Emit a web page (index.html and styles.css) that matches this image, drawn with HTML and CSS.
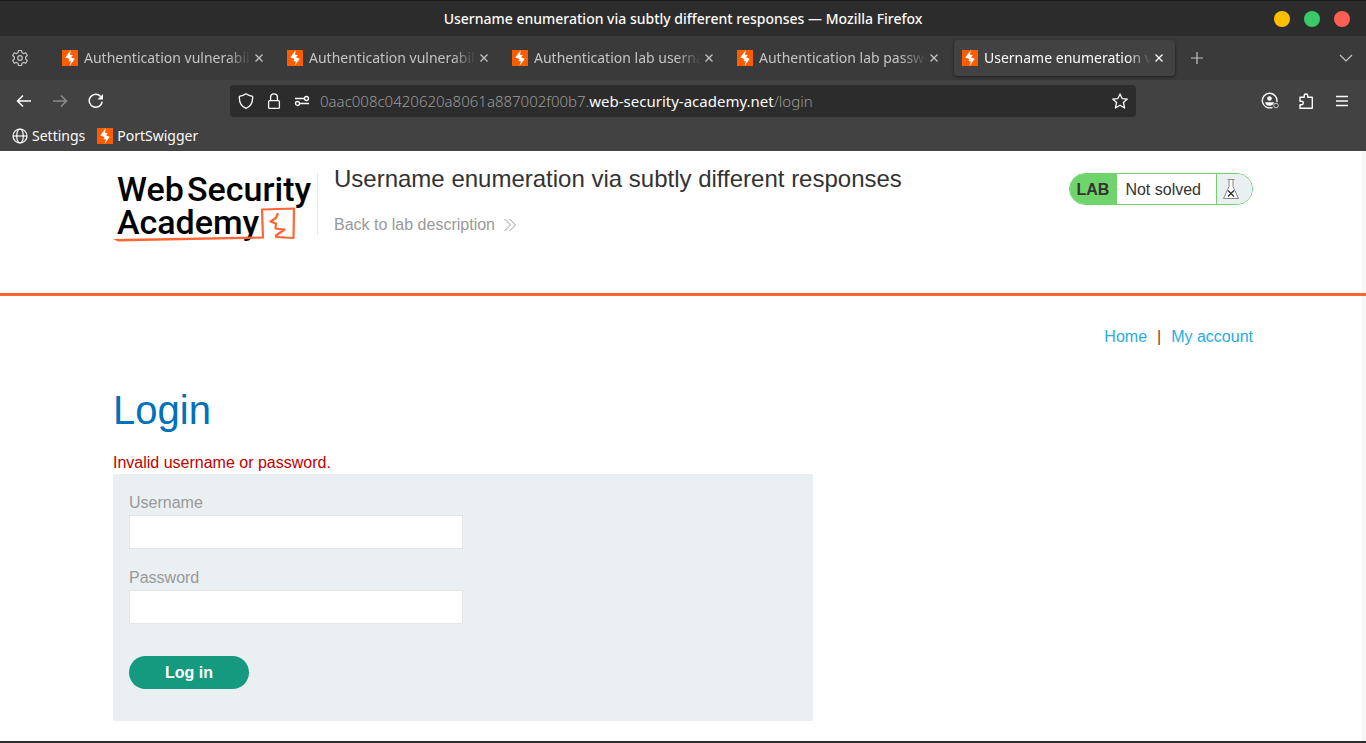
FILE: index.html
```html
<!DOCTYPE html>
<html lang="en">
<head>
<meta charset="utf-8">
<title>Username enumeration via subtly different responses</title>
<link rel="stylesheet" href="styles.css">
</head>
<body>
<svg class="defs" aria-hidden="true">
  <symbol id="bolt" viewBox="0 0 16 16"><rect width="16" height="16" fill="#ff5c00"/><path d="M8.800 0L3.300 7.500l4.200 1.400-1 2.100 2.500.600L7.500 16l5.300-7.200-4-1.500L11 5.300l-3-.600z" fill="#fff"/></symbol>
  <symbol id="x" viewBox="0 0 10 10"><path d="M1.5 1.5l7 7M8.5 1.5l-7 7" fill="none" stroke="currentColor" stroke-width="1.3"/></symbol>
</svg>

<header class="titlebar">
  <span class="window-title">Username enumeration via subtly different responses — Mozilla Firefox</span>
  <div class="window-buttons">
    <button class="dot dot-min" aria-label="Minimize"></button>
    <button class="dot dot-max" aria-label="Maximize"></button>
    <button class="dot dot-close" aria-label="Close"></button>
  </div>
</header>

<div class="tabbar">
  <button class="icon-button gear" aria-label="Tab settings"><svg width="18" height="18" viewBox="0 0 18 18" fill="none" stroke="currentColor" stroke-width="1.2" stroke-linejoin="round"><path d="M7.5 1.5h3l.5 2.2 1.6.9 2.1-.8 1.6 2.7-1.6 1.5v2l1.6 1.5-1.6 2.7-2.1-.8-1.6.9-.5 2.2h-3L7 14.3l-1.6-.9-2.1.8-1.6-2.7L3.300 10V8L1.700 6.500l1.600-2.700 2.100.8L7 3.700z"/><circle cx="9" cy="9" r="2.300"/></svg></button>
  <div class="tabs">
    <div class="tab"><button class="tab-label"><svg class="favicon"><use href="#bolt"/></svg><span>Authentication vulnerabilities</span></button><button class="tab-close" aria-label="Close tab"><svg><use href="#x"/></svg></button></div>
    <div class="tab"><button class="tab-label"><svg class="favicon"><use href="#bolt"/></svg><span>Authentication vulnerabilities</span></button><button class="tab-close" aria-label="Close tab"><svg><use href="#x"/></svg></button></div>
    <div class="tab"><button class="tab-label"><svg class="favicon"><use href="#bolt"/></svg><span>Authentication lab usernames</span></button><button class="tab-close" aria-label="Close tab"><svg><use href="#x"/></svg></button></div>
    <div class="tab"><button class="tab-label"><svg class="favicon"><use href="#bolt"/></svg><span>Authentication lab passwords</span></button><button class="tab-close" aria-label="Close tab"><svg><use href="#x"/></svg></button></div>
    <div class="tab tab-active"><button class="tab-label"><svg class="favicon"><use href="#bolt"/></svg><span>Username enumeration via</span></button><button class="tab-close" aria-label="Close tab"><svg><use href="#x"/></svg></button></div>
  </div>
  <button class="icon-button" aria-label="New tab"><svg width="14" height="14" viewBox="0 0 14 14" stroke="currentColor" stroke-width="1.2"><path d="M7 1v12M1 7h12"/></svg></button>
  <button class="icon-button tab-list" aria-label="List all tabs"><svg width="14" height="14" viewBox="0 0 14 14" fill="none" stroke="currentColor" stroke-width="1.2"><path d="M1 4l6 6 6-6"/></svg></button>
</div>

<nav class="toolbar" aria-label="Navigation">
  <div class="nav-buttons">
    <button class="icon-button" aria-label="Back"><svg width="16" height="16" viewBox="0 0 16 16" fill="none" stroke="currentColor" stroke-width="1.500"><path d="M15 8H2M7 2.500L1.500 8 7 13.500"/></svg></button>
    <button class="icon-button dim" aria-label="Forward"><svg width="16" height="16" viewBox="0 0 16 16" fill="none" stroke="currentColor" stroke-width="1.500"><path d="M1 8h13M9 2.500L14.500 8 9 13.500"/></svg></button>
    <button class="icon-button" aria-label="Reload"><svg width="16" height="16" viewBox="0 0 16 16" fill="none" stroke="currentColor" stroke-width="1.500"><path d="M14.200 8.600A6.500 6.500 0 1 1 12.600 3.400"/><path d="M15 1v5.500H9.500z" fill="currentColor" stroke="none"/></svg></button>
  </div>
  <div class="urlbar">
    <button class="icon-button" aria-label="Tracking protection"><svg width="16" height="16" viewBox="0 0 16 16" fill="none" stroke="currentColor" stroke-width="1.300" stroke-linejoin="round"><path d="M8 .8c2 1.500 4 2.200 6.600 2.500C15 9 12.500 13.500 8 15.300 3.500 13.500 1 9 1.400 3.300 4 3 6 2.300 8 .8z"/></svg></button>
    <button class="icon-button" aria-label="Site security"><svg width="16" height="16" viewBox="0 0 16 16" fill="none" stroke="currentColor" stroke-width="1.300"><rect x="2.600" y="7.600" width="10.800" height="7.800" rx="1"/><path d="M4.600 7.600V4.200a3.400 3.400 0 0 1 6.800 0v3.400"/></svg></button>
    <button class="icon-button" aria-label="Permissions"><svg width="16" height="16" viewBox="0 0 16 16" fill="none" stroke="currentColor" stroke-width="1.300"><path d="M1 5.500h9M6 10.500h9"/><circle cx="12.500" cy="5.500" r="2"/><circle cx="3.500" cy="10.500" r="2"/></svg></button>
    <div class="url" role="textbox" aria-label="Address" tabindex="0">0aac008c0420620a8061a887002f00b7.<span class="url-domain">web-security-academy.net</span>/login</div>
    <button class="icon-button" aria-label="Bookmark this page"><svg width="16" height="16" viewBox="0 0 16 16" fill="none" stroke="currentColor" stroke-width="1.300" stroke-linejoin="round"><path d="M8 .9l2.100 4.700 5.200.5-3.900 3.400 1.200 5.500L8 12.200 3.400 15l1.200-5.500L.7 6.100l5.200-.5z"/></svg></button>
  </div>
  <div class="tool-buttons">
    <button class="icon-button" aria-label="Account"><svg width="18" height="18" viewBox="0 0 18 18" fill="none" stroke="currentColor" stroke-width="1.400"><path d="M11.500 15.300A7.300 7.300 0 1 1 15.800 10"/><circle cx="8.500" cy="6.500" r="2.300" fill="currentColor" stroke="none"/><path d="M4 10.200h9l-1 2.300c-2 1.700-5 1.700-7 0z" fill="currentColor" stroke="none"/><circle cx="15" cy="13.500" r="2.300" stroke-width="1" opacity=".7"/></svg></button>
    <button class="icon-button" aria-label="Extensions"><svg width="16" height="16" viewBox="0 0 16 16" fill="none" stroke="currentColor" stroke-width="1.400" stroke-linejoin="round"><path d="M2 6V4.300h4.200V2.800a1.800 1.800 0 0 1 3.600 0v1.500h4.500v11H2v-3.600h1.600a1.700 1.700 0 0 0 0-3.400H2z"/></svg></button>
    <button class="icon-button" aria-label="Menu"><svg width="14" height="14" viewBox="0 0 14 14" stroke="currentColor" stroke-width="1.400"><path d="M1 2.500h12M1 7h12M1 11.500h12"/></svg></button>
  </div>
</nav>

<div class="bookmarks">
  <a href="#settings"><svg class="favicon" viewBox="0 0 16 16" fill="none" stroke="currentColor" stroke-width="1.200"><circle cx="8" cy="8" r="7"/><ellipse cx="8" cy="8" rx="3.300" ry="7"/><path d="M1 8h14"/></svg>Settings</a>
  <a href="#portswigger"><svg class="favicon"><use href="#bolt"/></svg>PortSwigger</a>
</div>

<div class="page">
  <div class="lab-header">
    <div class="container lab-row">
      <a class="logo" href="#academy" aria-label="Web Security Academy">
        <svg width="204" height="76" viewBox="0 0 204 76">
          <g class="logo-text"><text x="4" y="34">Web</text><text x="74" y="34">Security</text><text x="4" y="67">Academy</text></g>
          <g fill="none" stroke="#ff6633" stroke-width="2.200" stroke-linejoin="round"><path d="M150 71.500L149 42.500L181 41.500L180.500 71L163 70"/><path d="M165 46l-2 5-5.500 3.500 5.500 2-.500 5 9 1-8.500 6 .500 2.500"/></g>
          <path d="M0 72L150 69.500V71.500L5 74.500z" fill="#ff6633"/>
        </svg>
      </a>
      <div class="lab-title">
        <h2>Username enumeration via subtly different responses</h2>
        <a href="#description">Back to lab description <svg width="14" height="14" viewBox="0 0 14 14" fill="none" stroke="currentColor"><path d="M1.500 1l6 6-6 6M6.500 1l6 6-6 6"/></svg></a>
      </div>
      <div class="lab-status">
        <strong>LAB</strong><span>Not solved</span>
        <div class="flask"><svg width="18" height="22" viewBox="0 0 18 22" fill="#fff" stroke="#888"><path d="M5.500 1.500h7M7 1.500v7L1.500 20.500h15L11 8.500v-7"/><path d="M6 12.500l6 6M12 12.500l-6 6" stroke="#333" stroke-width="1.400"/></svg></div>
      </div>
    </div>
  </div>
  <main class="container">
    <nav class="links"><a href="#home">Home</a><span>|</span><a href="#account">My account</a></nav>
    <h1>Login</h1>
    <p class="warning">Invalid username or password.</p>
    <form class="login-form">
      <label for="username">Username</label>
      <input id="username" type="text" name="username">
      <label for="password">Password</label>
      <input id="password" type="password" name="password">
      <button type="submit">Log in</button>
    </form>
  </main>
</div>
</body>
</html>
```
FILE: styles.css
```css
* { box-sizing: border-box; }
body {
  margin: 0;
  min-height: 100vh;
  display: flex;
  flex-direction: column;
  background: #fff;
  font: 16px/20px "Liberation Sans", Arial, sans-serif;
  color: #333332;
}
button { font: inherit; color: inherit; background: none; border: 0; padding: 0; }
a { text-decoration: none; color: inherit; }
svg { flex: none; }
.defs { display: none; }

.titlebar, .tabbar, .toolbar, .bookmarks {
  display: flex;
  align-items: center;
  flex: none;
  font: 14px/20px "Noto Sans", "Open Sans", sans-serif;
  color: #fbfbfb;
}
.titlebar {
  display: grid;
  grid-template-columns: 1fr auto 1fr;
  height: 36px;
  padding-right: 16px;
  background: #2c2c2c;
  border-top: 1px solid #1c1c1c;
}
.window-title { grid-column: 2; font-weight: 500; padding-left: 16px; }
.window-buttons { display: flex; gap: 14px; justify-content: flex-end; }
.dot { width: 16px; height: 16px; border-radius: 50%; }
.dot-min { background: #ffbf00; }
.dot-max { background: #38c968; }
.dot-close { background: #ff5f52; }

.icon-button { display: grid; place-items: center; width: 28px; height: 28px; flex: none; }
.icon-button.dim { color: #8b8b8b; }

.tabbar { height: 44px; padding: 0 6px; background: #3a3a3a; color: #c4c4c4; }
.tabs { display: flex; gap: 4px; margin: 0 8px 0 20px; min-width: 0; }
.tab {
  display: flex;
  align-items: center;
  width: 221px;
  height: 36px;
  padding: 0 8px;
  border-radius: 4px;
  min-width: 0;
}
.tab-active { background: #424242; color: #fbfbfb; box-shadow: 0 1px 3px #1c1c1c; }
.tab-label { display: flex; align-items: center; gap: 6px; flex: 1; min-width: 0; text-align: left; }
.tab-label span {
  flex: 1;
  overflow: hidden;
  white-space: nowrap;
  mask-image: linear-gradient(to left, transparent, #000 24px);
}
.favicon { width: 16px; height: 16px; }
.tab-close { display: grid; place-items: center; width: 16px; height: 20px; }
.tab-close svg { width: 10px; height: 10px; }
.tab-list { margin-left: auto; }

.toolbar { height: 42px; padding: 0 10px; background: #424242; }
.nav-buttons, .tool-buttons { display: flex; gap: 8px; width: 220px; flex: none; }
.tool-buttons { justify-content: flex-end; }
.urlbar {
  flex: 1;
  display: flex;
  align-items: center;
  height: 32px;
  max-width: 906px;
  padding: 0 2px;
  background: #2c2c2c;
  border-radius: 4px;
}
.url { flex: 1; padding-left: 4px; color: #9a9a9a; white-space: nowrap; overflow: hidden; font-size: 15px; font-weight: 300; }
.url-domain { color: #fbfbfb; font-weight: 400; }
.bookmarks { height: 29px; padding: 0 12px 2px; gap: 12px; background: #424242; }
.bookmarks a { display: flex; align-items: center; gap: 4px; }

.page {
  flex: 1;
  border-bottom: 2px solid #2c2c2c;
  background: linear-gradient(#f7f7f7, #f7f7f7) right / 4px 100% no-repeat;
}
.container { width: 100%; max-width: 1140px; margin: 0 auto; }
.lab-header { border-bottom: 3px solid #ff6633; }
.lab-row { display: flex; align-items: flex-start; padding: 16px 0; min-height: 142px; }
.logo { flex: none; }
.logo svg { display: block; }
.logo-text { font: 500 34px/34px Roboto, sans-serif; fill: #000; }
.lab-title { flex: 1; margin-top: 6px; padding-left: 16px; border-left: 1px solid #e6e6e6; height: 62px; }
.lab-title h2 { margin: -8px 0 22px; font-size: 24px; line-height: 28px; font-weight: 400; }
.lab-title a { display: flex; align-items: center; gap: 8px; color: #999; }
.lab-status {
  display: flex;
  margin-top: 6px;
  height: 32px;
  line-height: 32px;
  border: 1px solid #70d46d;
  border-radius: 16px;
  overflow: hidden;
}
.lab-status strong { padding: 0 8px 0 7px; background: #70d46d; }
.lab-status span { padding: 0 15px 0 8px; }
.flask { display: grid; place-items: center; width: 36px; padding-right: 8px; border-left: 1px solid #70d46d; background: #eaeff2; }

.links { display: flex; justify-content: flex-end; gap: 10px; padding: 31px 0 39px; color: #6d4c1c; }
.links a { color: #29ace2; }
h1 { margin: 0; font-size: 40px; line-height: 48px; font-weight: 400; color: #0071ba; }
.warning { margin: 19px 0 1px; color: #c00000; }
.login-form {
  display: flex;
  flex-direction: column;
  align-items: flex-start;
  max-width: 700px;
  padding: 19px 16px 32px;
  background: #eaeff2;
}
.login-form label { color: #999; margin-bottom: 2px; }
.login-form input {
  width: 50%;
  height: 34px;
  margin-bottom: 19px;
  padding: 0 8px;
  border: 1px solid #e4e4e4;
  background: #fff;
  font: inherit;
}
.login-form button {
  width: 120px;
  height: 33px;
  margin-top: 13px;
  border-radius: 17px;
  background: #159a80;
  color: #fff;
  font-weight: 700;
}
```
